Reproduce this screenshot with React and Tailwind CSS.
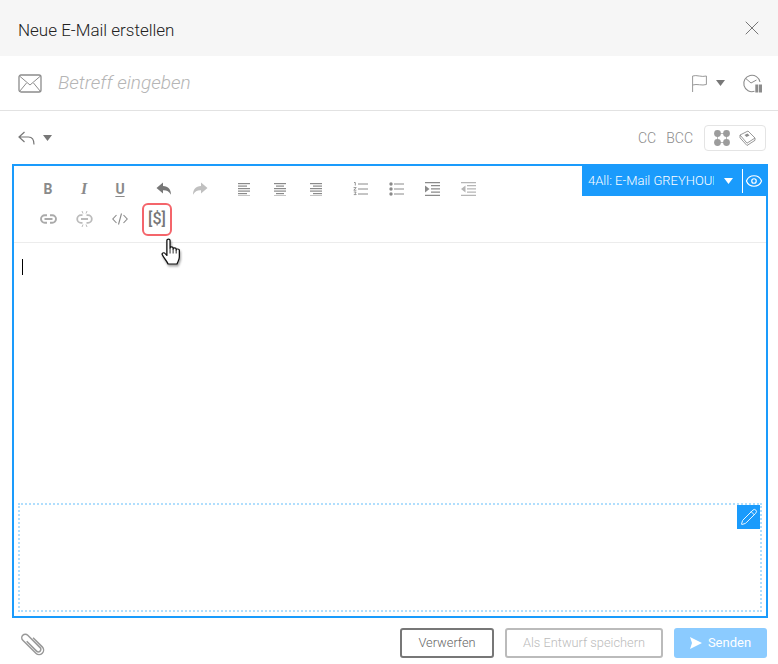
import { X, Eye, Pencil } from 'lucide-react';

const Caret = ({ className = '' }) => (
  <svg width="9" height="6" viewBox="0 0 9 6" className={className}>
    <path d="M0 0h9L4.500 6z" fill="currentColor" />
  </svg>
);

const Lines = ({ rows, className = '' }) => (
  <svg width="14" height="13" viewBox="0 0 14 13" className={className}>
    {rows.map(([x1, x2], i) => (
      <rect key={i} x={x1} y={i * 2.5} width={x2 - x1} height="1.2" fill="currentColor" />
    ))}
  </svg>
);

const Slot = ({ children, className = 'text-[#8a8a8a]' }) => (
  <div className={`w-9 h-[30px] flex items-center justify-center shrink-0 ${className}`}>{children}</div>
);

const Undo = ({ flip }) => (
  <svg width="16" height="14" viewBox="0 0 16 14" className={flip ? '-scale-x-100' : ''}>
    <path d="M7 0.5 0.5 6 7 11.5V8.2c3.6-.2 6 1 8 4.6 0-5.2-2.6-8.4-8-8.8z" fill="currentColor" />
  </svg>
);

const OrderedList = () => (
  <svg width="15" height="14" viewBox="0 0 15 14">
    <path d="M5 2h10M5 7h10M5 12h10" stroke="currentColor" strokeWidth="1" />
    <path d="M1 .5h1.300v3M.6 5.600h2.600L.8 8.200h2.600M.8 10h2.400l-1 1.200 1 1.400H.8" fill="none" stroke="currentColor" strokeWidth=".9" />
  </svg>
);

const BulletList = () => (
  <svg width="15" height="14" viewBox="0 0 15 14">
    <path d="M5 2h10M5 7h10M5 12h10" stroke="currentColor" strokeWidth="1" />
    <circle cx="2" cy="2" r="1.700" fill="currentColor" />
    <circle cx="2" cy="7" r="1.700" fill="currentColor" />
    <circle cx="2" cy="12" r="1.700" fill="currentColor" />
  </svg>
);

const Indent = ({ out }) => (
  <svg width="15" height="14" viewBox="0 0 15 14">
    <path d="M0 .7h15M0 13.300h15M6 3.700h9M6 6.900h9M6 10.100h9" stroke="currentColor" strokeWidth="1.200" />
    <path d={out ? 'M4.500 3.500v7L0 7z' : 'M0 3.500v7L4.500 7z'} fill="currentColor" />
  </svg>
);

const LinkIcon = () => (
  <svg width="17" height="10" viewBox="0 0 17 10">
    <path d="M7 1.200H4.800a3.800 3.800 0 0 0 0 7.600H7M10 1.200h2.200a3.800 3.800 0 0 1 0 7.600H10M4.500 5h8" fill="none" stroke="currentColor" strokeWidth="1.900" />
  </svg>
);

const Unlink = () => (
  <svg width="17" height="16" viewBox="0 0 17 16">
    <path d="M6.500 4.200H5a3.800 3.800 0 0 0 0 7.600h1.500M10.500 4.200H12a3.800 3.800 0 0 1 0 7.600h-1.500M5 8h7" fill="none" stroke="currentColor" strokeWidth="1.800" />
    <path d="M6 0l1 2.500M11 0l-1 2.500M6 16l1-2.500M11 16l-1-2.500" stroke="currentColor" strokeWidth="1" />
  </svg>
);

const Code = () => (
  <svg width="16" height="12" viewBox="0 0 16 12">
    <path d="M4.500 2 .8 6l3.700 4M11.500 2l3.700 4-3.700 4M9.500.5l-3 11" fill="none" stroke="currentColor" strokeWidth="1.100" />
  </svg>
);

const Hand = () => (
  <svg width="20" height="27" viewBox="0 0 17 27" preserveAspectRatio="none" className="drop-shadow-[1px_2px_1px_rgba(0,0,0,0.35)]">
    <path
      d="M5 2.500c0-1.800 2.700-1.800 2.700 0V10c0-1.500 2.600-1.500 2.600 0v1c0-1.500 2.600-1.500 2.600 0v1c0-1.500 2.700-1.400 2.700.2V19c0 2.500-1 4-2 7H6C5 23 3 21 1.200 17c-1-2 1.300-3 2.300-1.500L5 17.500z"
      fill="#fff"
      stroke="#111"
      strokeWidth="1.100"
      strokeLinejoin="round"
    />
    <path d="M7.700 10v5.500M10.300 11v4.500M12.900 12v3.500" stroke="#111" strokeWidth=".8" />
  </svg>
);

const Envelope = () => (
  <svg width="24" height="19" viewBox="0 0 24 19" className="text-[#8c8c8c]">
    <rect x="1" y="1" width="22" height="17" rx="2" fill="none" stroke="currentColor" strokeWidth="1.300" />
    <path d="M1.500 2 12 11 22.500 2M1.500 17.500 8.500 9M22.500 17.500 15.500 9" fill="none" stroke="currentColor" strokeWidth="1" />
  </svg>
);

const Reply = () => (
  <svg width="17" height="14" viewBox="0 0 17 14" className="text-[#777]">
    <path d="M6.500 1 1 6l5.500 5M1 6h9.500c3.200 0 5.500 2 5.500 7.500" fill="none" stroke="currentColor" strokeWidth="1.200" />
  </svg>
);

const Flag = () => (
  <svg width="15" height="17" viewBox="0 0 15 17" className="text-[#999]">
    <path d="M.6 17V1c4-1.500 9 1.500 13.800 0v8.500C10 11 5 8.500.6 10" fill="none" stroke="currentColor" strokeWidth="1" />
  </svg>
);

const ClockPause = () => (
  <svg width="20" height="19" viewBox="0 0 20 19" className="text-[#8c8c8c]">
    <path d="M12.500 17.300A8.200 8.200 0 1 1 18 8" fill="none" stroke="currentColor" strokeWidth="1.100" />
    <path d="M9 9 3.800 4.500M9 9l5.500-3" stroke="currentColor" strokeWidth="1" />
    <rect x="13.300" y="10.500" width="3" height="8" fill="currentColor" />
    <rect x="17" y="10.500" width="3" height="8" fill="currentColor" />
  </svg>
);

const Modules = () => (
  <svg width="16" height="16" viewBox="0 0 16 16" className="text-[#9c9c9c]">
    <path d="M3.500 3.500h9v9h-9z" fill="none" stroke="currentColor" strokeWidth=".7" />
    <circle cx="3.500" cy="3.500" r="3.400" fill="currentColor" />
    <circle cx="12.500" cy="3.500" r="3.400" fill="currentColor" />
    <circle cx="3.500" cy="12.500" r="3.400" fill="currentColor" />
    <circle cx="12.500" cy="12.500" r="3.400" fill="currentColor" />
  </svg>
);

const Book = () => (
  <svg width="17" height="16" viewBox="0 0 17 16" className="text-[#8c8c8c]">
    <path d="M1 5 9 1l7 7-8 5.200zM1 5v2.800l7 7.700 8-5.200V8" fill="none" stroke="currentColor" strokeWidth=".9" strokeLinejoin="round" />
    <path d="M5.500 5 8.500 3.500l2 2-3 1.500z" fill="currentColor" />
  </svg>
);

const Clip = () => (
  <svg width="26" height="26" viewBox="0 0 26 26" className="text-[#999]">
    <path
      transform="rotate(-45 13 13)"
      d="M10.500 8v14a2.500 2.500 0 0 0 5 0V4.500a3.500 3.500 0 0 0-7 0V23a4.500 4.500 0 0 0 9 0V10"
      fill="none"
      stroke="currentColor"
      strokeWidth="1.500"
    />
  </svg>
);

const Send = () => (
  <svg width="12" height="12" viewBox="0 0 12 12">
    <path d="M0 0 12 6 0 12l2-6z" fill="currentColor" />
  </svg>
);

export default function App() {
  return (
    <div className="w-[778px] h-[664px] bg-white overflow-hidden font-['Roboto',sans-serif]">
      <header className="h-14 bg-[#f6f6f6] pl-[18px] pr-[14px] flex items-center justify-between">
        <h1 className="pt-1.5 text-[17px] font-light text-[#222]">Neue E-Mail erstellen</h1>
        <X className="w-6 h-6 text-[#777]" strokeWidth={1} />
      </header>

      <div className="h-[55px] border-b border-[#e2e2e2] pl-[18px] pr-4 flex items-center">
        <Envelope />
        <span className="ml-4 text-[19px] font-light italic text-[#b5b5b5]">Betreff eingeben</span>
        <div className="ml-auto flex items-center">
          <Flag />
          <Caret className="ml-[9px] text-[#777]" />
          <div className="ml-[17px]"><ClockPause /></div>
        </div>
      </div>

      <div className="h-[53px] pl-[18px] pr-3 pt-px flex items-center">
        <Reply />
        <Caret className="ml-2 text-[#777]" />
        <div className="ml-auto flex items-center">
          <span className="text-sm font-light text-[#8c8c8c]">CC</span>
          <span className="ml-[10px] text-sm font-light text-[#8c8c8c]">BCC</span>
          <div className="ml-[11px] w-[62px] h-[26px] border border-[#e4e4e4] rounded flex items-center justify-center gap-[9px]">
            <Modules />
            <Book />
          </div>
        </div>
      </div>

      <div className="relative ml-3 w-[756px] h-[454px] border-2 border-[#1a9bfc] flex flex-col">
        <div className="h-[77px] border-b border-[#ececec] pl-4 pt-2">
          <div className="flex items-center">
            <Slot><span className="font-bold text-sm">B</span></Slot>
            <Slot><span className="font-['Liberation_Serif',serif] font-bold italic text-base">I</span></Slot>
            <Slot><span className="font-bold text-sm underline underline-offset-2">U</span></Slot>
            <div className="w-2" />
            <Slot className="text-[#777]"><Undo /></Slot>
            <Slot className="text-[#c0c0c0]"><Undo flip /></Slot>
            <div className="w-2" />
            <Slot><Lines rows={[[1, 13], [1, 10], [1, 13], [1, 13], [1, 10], [1, 13]]} /></Slot>
            <Slot><Lines rows={[[1, 13], [3, 11], [1, 13], [1, 13], [3, 11], [1, 13]]} /></Slot>
            <Slot><Lines rows={[[1, 13], [4, 13], [1, 13], [1, 13], [4, 13], [1, 13]]} /></Slot>
            <div className="w-2" />
            <Slot><OrderedList /></Slot>
            <Slot><BulletList /></Slot>
            <Slot><Indent /></Slot>
            <Slot className="text-[#b5b5b5]"><Indent out /></Slot>
          </div>
          <div className="h-[30px] flex items-center">
            <Slot className="text-[#aaa]"><LinkIcon /></Slot>
            <Slot className="text-[#bbb]"><Unlink /></Slot>
            <Slot><Code /></Slot>
            <div className="relative ml-1 w-[30px] h-[33px] shrink-0 border-2 border-[#f4656b] rounded-md flex items-center justify-center text-[16px] font-medium text-[#777]">
              [$]
              <div className="absolute left-[17px] top-[33px]"><Hand /></div>
            </div>
          </div>
        </div>

        <div className="flex-1 pl-2 pt-4">
          <div className="w-px h-4 bg-black" />
        </div>

        <div className="relative mx-1 mb-1 h-[109px] border-2 border-dotted border-[#b0defd]">
          <div className="absolute top-0 right-0 w-[23px] h-6 bg-[#1a9bfc] flex items-center justify-center">
            <Pencil className="w-[18px] h-[18px] text-white" strokeWidth={1.2} />
          </div>
        </div>

        <div className="absolute top-0 -right-0.5 w-[186px] h-[30px] bg-[#1a9bfc] text-white flex items-center pl-1.5">
          <span className="w-[126px] overflow-hidden whitespace-nowrap text-[13px] font-light">4All: E-Mail GREYHOUND</span>
          <Caret className="ml-[10px]" />
          <div className="ml-[9px] w-px h-[24px] bg-white" />
          <Eye className="ml-0.5 w-[18px] h-[18px]" strokeWidth={1.6} />
        </div>
      </div>

      <footer className="h-[46px] pl-[19px] pr-[11px] pt-1 flex items-center">
        <Clip />
        <div className="ml-auto flex items-center gap-[11px]">
          <button className="w-[94px] h-[30px] border-2 border-[#777] rounded-[3px] text-[12.8px] font-light text-[#666]">Verwerfen</button>
          <button className="w-[158px] h-[30px] border-2 border-[#bbb] rounded-[3px] text-[12.8px] font-light text-[#bbb]">Als Entwurf speichern</button>
          <button className="w-[93px] h-[30px] bg-[#8bcbff] rounded-[3px] text-[13px] text-white flex items-center justify-center gap-[6px]">
            <Send />
            Senden
          </button>
        </div>
      </footer>
    </div>
  );
}
